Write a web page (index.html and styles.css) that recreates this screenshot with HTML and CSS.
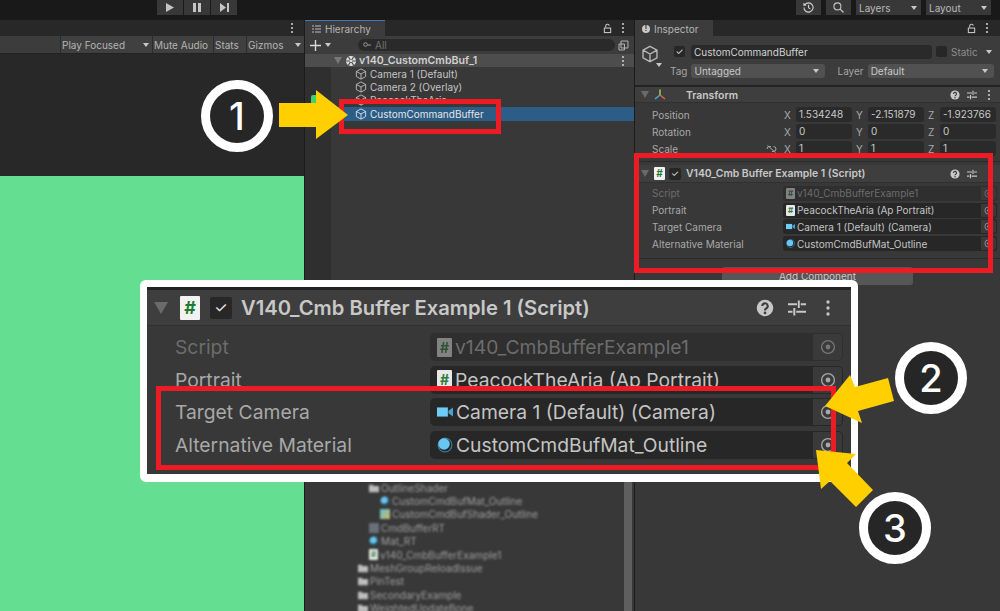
FILE: index.html
```html
<!DOCTYPE html>
<html lang="en">
<head>
    <meta charset="UTF-8">
    <title>Unity Editor</title>
    <link rel="stylesheet" href="styles.css">
</head>
<body>
<svg class="defs" width="0" height="0">
    <symbol id="cube" viewBox="0 0 16 16"><path d="M8 1.2 14.2 4.6V11.4L8 14.8 1.8 11.4V4.6ZM1.8 4.6 8 8 14.2 4.6M8 8V14.8" fill="none" stroke="currentColor" stroke-width="1.2"/></symbol>
    <symbol id="dots" viewBox="0 0 4 12"><circle cx="2" cy="2" r="1.1" fill="currentColor"/><circle cx="2" cy="6" r="1.1" fill="currentColor"/><circle cx="2" cy="10" r="1.1" fill="currentColor"/></symbol>
    <symbol id="lock" viewBox="0 0 10 12"><path d="M3 5V3.5A2 2 0 0 1 7 3" fill="none" stroke="currentColor" stroke-width="1.2"/><rect x="1.5" y="5.5" width="7" height="5" fill="none" stroke="currentColor" stroke-width="1.2"/></symbol>
    <symbol id="sliders" viewBox="0 0 12 12"><path d="M0 3.5H6M8.500 3.500H12M0 8.500H3M5.500 8.500H12M7.200 1V6M4.200 6V11" fill="none" stroke="currentColor" stroke-width="1.3"/></symbol>
    <symbol id="target" viewBox="0 0 12 12"><circle cx="6" cy="6" r="4.800" fill="none" stroke="currentColor" stroke-width="1"/><circle cx="6" cy="6" r="1.800" fill="currentColor"/></symbol>
    <symbol id="help" viewBox="0 0 12 12"><circle cx="6" cy="6" r="5.500" fill="currentColor"/><path d="M4.200 4.700A1.800 1.800 0 1 1 6.800 6.300C6.200 6.700 6 7 6 7.600" fill="none" stroke="#3c3c3c" stroke-width="1.400"/><circle cx="6" cy="9.300" r=".9" fill="#3c3c3c"/></symbol>
    <symbol id="camera" viewBox="0 0 14 10"><rect x="0" y="1" width="9.500" height="8" fill="#6fcdf5"/><path d="M10 4 14 1V9L10 6Z" fill="#4aa3cc"/></symbol>
    <symbol id="sphere" viewBox="0 0 12 12"><circle cx="6" cy="6" r="5.600" fill="#3b7a96"/><circle cx="6" cy="6" r="4.700" fill="#232323"/><circle cx="5.300" cy="5.200" r="4.300" fill="#67c6f2"/></symbol>
    <symbol id="folder" viewBox="0 0 12 10"><path d="M0 1H4.500L5.500 2.500H12V10H0Z" fill="#bdbdbd"/></symbol>
</svg>

<div class="app">
    <div class="toolbar">
        <div class="play-group">
            <button class="tool-btn"><svg width="8" height="9" viewBox="0 0 8 9"><path d="M0 0 8 4.500 0 9Z" fill="#c4c4c4"/></svg></button>
            <button class="tool-btn"><svg width="8" height="9" viewBox="0 0 8 9"><path d="M0 0H3V9H0ZM5 0H8V9H5Z" fill="#c4c4c4"/></svg></button>
            <button class="tool-btn"><svg width="9" height="9" viewBox="0 0 9 9"><path d="M0 0 6 4.500 0 9ZM7 0H9V9H7Z" fill="#c4c4c4"/></svg></button>
        </div>
        <div class="tool-right">
            <button class="tool-btn icon-btn"><svg width="11" height="11" viewBox="0 0 12 12"><path d="M2 3A5 5 0 1 1 1 6M1 1V3.500H3.500M6 3V6.300L8 7.500" fill="none" stroke="#d0d0d0" stroke-width="1.200"/></svg></button>
            <button class="tool-btn icon-btn search-btn"><svg width="11" height="11" viewBox="0 0 12 12"><circle cx="4.800" cy="4.800" r="3.800" fill="none" stroke="#c4c4c4" stroke-width="1.200"/><path d="M7.800 7.800 11.500 11.500" stroke="#c4c4c4" stroke-width="1.400"/></svg></button>
            <div class="tool-drop layers">Layers<span class="caret"></span></div>
            <div class="tool-drop layout">Layout<span class="caret"></span></div>
        </div>
    </div>

    <div class="panes">
        <section class="game">
            <div class="tabbar game-tabbar"><svg class="dots"><use href="#dots"/></svg></div>
            <div class="game-controls">
                <div class="gc-btn gc-play">Play Focused<span class="caret"></span></div>
                <div class="gc-btn gc-mute">Mute Audio</div>
                <div class="gc-btn gc-stats">Stats</div>
                <div class="gc-btn gc-gizmos">Gizmos<span class="caret"></span></div>
            </div>
            <div class="game-dark"></div>
            <div class="game-view"></div>
        </section>

        <section class="hierarchy">
            <div class="tabbar">
                <div class="tab hier-tab"><svg class="tab-icon" width="9" height="8" viewBox="0 0 9 8"><path d="M0 1H2M3 1H9M0 4H2M3 4H9M0 7H2M3 7H9" stroke="#bbb" stroke-width="1"/></svg>Hierarchy</div>
                <svg class="lock"><use href="#lock"/></svg>
                <svg class="dots"><use href="#dots"/></svg>
            </div>
            <div class="hier-search">
                <svg class="plus" width="11" height="11" viewBox="0 0 11 11"><path d="M5.500 0V11M0 5.500H11" stroke="#d8d8d8" stroke-width="1.400"/></svg>
                <span class="caret"></span>
                <div class="search-field"><svg width="8" height="6" viewBox="0 0 8 6"><circle cx="2.500" cy="2.500" r="1.800" fill="none" stroke="#999"/><path d="M4.500 3H8" stroke="#999"/></svg><span>All</span></div>
                <svg class="save-icon" width="11" height="11" viewBox="0 0 11 11"><path d="M3 1H10V8H3ZM1 4H6.500V10H1Z" fill="none" stroke="#b5b5b5"/></svg>
            </div>
            <div class="scene-row">
                <span class="tri-down"></span>
                <svg class="scene-icon" width="10" height="10" viewBox="0 0 10 10"><circle cx="5" cy="5" r="5" fill="#e0e0e0"/><path d="M5 5 2.500 1M5 5 7.500 1M5 5H0M5 5H10M5 5 2.500 9M5 5 7.500 9" stroke="#4d4d4d" stroke-width="1.200"/><circle cx="5" cy="5" r="1.200" fill="#e0e0e0"/></svg>
                <span>v140_CustomCmbBuf_1</span>
                <svg class="dots"><use href="#dots"/></svg>
            </div>
            <div class="hier-list">
                <div class="hier-row"><svg class="cube"><use href="#cube"/></svg>Camera 1 (Default)</div>
                <div class="hier-row"><svg class="cube"><use href="#cube"/></svg>Camera 2 (Overlay)</div>
                <div class="hier-row"><span class="gutter-ico"></span><svg class="cube"><use href="#cube"/></svg>PeacockTheAria</div>
                <div class="hier-row selected"><svg class="cube"><use href="#cube"/></svg>CustomCommandBuffer</div>
            </div>
            <div class="project">
                <div class="tree-row lv2"><svg class="ico"><use href="#folder"/></svg>OutlineShader</div>
                <div class="tree-row lv3"><svg class="ico"><use href="#sphere"/></svg>CustomCmdBufMat_Outline</div>
                <div class="tree-row lv3"><span class="shader-ico"></span>CustomCmdBufShader_Outline</div>
                <div class="tree-row lv2"><span class="rt-ico"></span>CmdBufferRT</div>
                <div class="tree-row lv2"><svg class="ico"><use href="#sphere"/></svg>Mat_RT</div>
                <div class="tree-row lv2"><span class="doc-ico"></span>v140_CmbBufferExample1</div>
                <div class="tree-row lv1"><svg class="ico"><use href="#folder"/></svg>MeshGroupReloadIssue</div>
                <div class="tree-row lv1"><svg class="ico"><use href="#folder"/></svg>PinTest</div>
                <div class="tree-row lv1"><svg class="ico"><use href="#folder"/></svg>SecondaryExample</div>
                <div class="tree-row lv1"><svg class="ico"><use href="#folder"/></svg>WeightedUpdateBone</div>
                <div class="scrollbar"></div>
            </div>
        </section>

        <section class="inspector">
            <div class="tabbar">
                <div class="tab insp-tab"><span class="info-dot">!</span>Inspector</div>
                <svg class="lock"><use href="#lock"/></svg>
                <svg class="dots"><use href="#dots"/></svg>
            </div>
            <div class="obj-head">
                <div class="obj-icon"><svg class="obj-cube"><use href="#cube"/></svg><span class="caret"></span></div>
                <div class="obj-lines">
                    <div class="obj-line">
                        <span class="check">&#10003;</span>
                        <div class="name-field">CustomCommandBuffer</div>
                        <span class="check static-check"></span>
                        <span class="static-label">Static</span>
                        <span class="caret"></span>
                    </div>
                    <div class="obj-line second">
                        <span class="tag-label">Tag</span>
                        <div class="select tag-select">Untagged<span class="caret"></span></div>
                        <span class="layer-label">Layer</span>
                        <div class="select layer-select">Default<span class="caret"></span></div>
                    </div>
                </div>
            </div>
            <div class="comp-head transform-head">
                <span class="tri-down"></span>
                <svg class="axis" width="12" height="12" viewBox="0 0 12 12"><path d="M6 6V0.500" stroke="#8ccf3e" stroke-width="1.600"/><path d="M6 6 1 10" stroke="#49a6e0" stroke-width="1.600"/><path d="M6 6 11 10" stroke="#e4603a" stroke-width="1.600"/></svg>
                <span class="comp-title">Transform</span>
                <svg class="hd-icon"><use href="#help"/></svg>
                <svg class="hd-icon"><use href="#sliders"/></svg>
                <svg class="dots"><use href="#dots"/></svg>
            </div>
            <div class="transform-body">
                <div class="t-row"><span class="t-label">Position</span><span class="axis-l">X</span><span class="t-field">1.534248</span><span class="axis-l">Y</span><span class="t-field">-2.151879</span><span class="axis-l">Z</span><span class="t-field">-1.923766</span></div>
                <div class="t-row"><span class="t-label">Rotation</span><span class="axis-l">X</span><span class="t-field">0</span><span class="axis-l">Y</span><span class="t-field">0</span><span class="axis-l">Z</span><span class="t-field">0</span></div>
                <div class="t-row"><span class="t-label">Scale<svg class="link-ico" width="11" height="8" viewBox="0 0 11 8"><path d="M1 4A2.500 2.500 0 0 1 3.500 1.500H5M6 6.500H7.500A2.500 2.500 0 0 0 7.500 1.500M1.500 .5 9.500 7.500" fill="none" stroke="#a8a8a8" stroke-width="1"/></svg></span><span class="axis-l">X</span><span class="t-field">1</span><span class="axis-l">Y</span><span class="t-field">1</span><span class="axis-l">Z</span><span class="t-field">1</span></div>
            </div>
            <div class="comp-head script-head">
                <span class="tri-down"></span>
                <span class="script-ico">#</span>
                <span class="check">&#10003;</span>
                <span class="comp-title">V140_Cmb Buffer Example 1 (Script)</span>
                <svg class="hd-icon"><use href="#help"/></svg>
                <svg class="hd-icon"><use href="#sliders"/></svg>
                <svg class="dots no-dots"><use href="#dots"/></svg>
            </div>
            <div class="script-body">
                <div class="p-row dim"><span class="p-label">Script</span><div class="p-field"><span class="doc-ico"></span>v140_CmbBufferExample1<span class="pick-box"><svg class="pick"><use href="#target"/></svg></span></div></div>
                <div class="p-row"><span class="p-label">Portrait</span><div class="p-field"><span class="doc-ico"></span>PeacockTheAria (Ap Portrait)<span class="pick-box"><svg class="pick"><use href="#target"/></svg></span></div></div>
                <div class="p-row"><span class="p-label">Target Camera</span><div class="p-field"><svg class="f-ico"><use href="#camera"/></svg>Camera 1 (Default) (Camera)<span class="pick-box"><svg class="pick"><use href="#target"/></svg></span></div></div>
                <div class="p-row"><span class="p-label">Alternative Material</span><div class="p-field"><svg class="f-ico"><use href="#sphere"/></svg>CustomCmdBufMat_Outline<span class="pick-box"><svg class="pick"><use href="#target"/></svg></span></div></div>
            </div>
            <div class="add-wrap"><div class="add-btn">Add Component</div></div>
        </section>
    </div>
</div>

<!-- magnified copy of the script component -->
<div class="zoom-panel">
    <div class="comp-head">
        <span class="tri-down"></span>
        <span class="script-ico">#</span>
        <span class="check">&#10003;</span>
        <span class="comp-title">V140_Cmb Buffer Example 1 (Script)</span>
        <svg class="hd-icon"><use href="#help"/></svg>
        <svg class="hd-icon"><use href="#sliders"/></svg>
        <svg class="dots"><use href="#dots"/></svg>
    </div>
    <div class="zoom-body">
        <div class="p-row dim"><span class="p-label">Script</span><div class="p-field"><span class="doc-ico"></span>v140_CmbBufferExample1<span class="pick-box"><svg class="pick"><use href="#target"/></svg></span></div></div>
        <div class="p-row"><span class="p-label">Portrait</span><div class="p-field"><span class="doc-ico"></span>PeacockTheAria (Ap Portrait)<span class="pick-box"><svg class="pick"><use href="#target"/></svg></span></div></div>
        <div class="p-row"><span class="p-label">Target Camera</span><div class="p-field"><svg class="f-ico"><use href="#camera"/></svg>Camera 1 (Default) (Camera)<span class="pick-box"><svg class="pick"><use href="#target"/></svg></span></div></div>
        <div class="p-row"><span class="p-label">Alternative Material</span><div class="p-field"><svg class="f-ico"><use href="#sphere"/></svg>CustomCmdBufMat_Outline<span class="pick-box"><svg class="pick"><use href="#target"/></svg></span></div></div>
    </div>
</div>

<div class="redbox red-hier"></div>
<div class="redbox red-insp"></div>
<div class="redbox red-zoom"></div>

<svg class="arrows" width="1000" height="611" viewBox="0 0 1000 611">
    <path d="M279 103H316V90L348 115 316 139V127H279Z" fill="#ffcf00"/>
    <path d="M888 378 855 387 850 375 825 406 862 423 858 411 894 401Z" fill="#ffcf00"/>
    <path d="M873 490 847 463 856 454 816 450 821 489 830 481 856 507Z" fill="#ffcf00"/>
</svg>

<div class="badge badge-1">1</div>
<div class="badge badge-2">2</div>
<div class="badge badge-3">3</div>
</body>
</html>
```

FILE: styles.css
```css
* {
    margin: 0;
    padding: 0;
    box-sizing: border-box;
}
body {
    width: 1000px;
    height: 611px;
    overflow: hidden;
    background: #191919;
    font-family: "Inter", "Liberation Sans", sans-serif;
    font-size: 10px;
    color: #c4c4c4;
}
.defs {
    position: absolute;
}
.app {
    width: 1000px;
    height: 611px;
    display: flex;
    flex-direction: column;
}

/* shared bits */
.caret {
    display: inline-block;
    width: 0;
    height: 0;
    border-left: 3.5px solid transparent;
    border-right: 3.5px solid transparent;
    border-top: 4px solid #c8c8c8;
    flex: none;
}
.tri-down {
    width: 0;
    height: 0;
    border-left: 4px solid transparent;
    border-right: 4px solid transparent;
    border-top: 7px solid #6a6a6a;
    flex: none;
}
.dots {
    width: 4px;
    height: 12px;
    color: #c8c8c8;
    flex: none;
}
.lock {
    width: 9px;
    height: 11px;
    color: #c4c4c4;
    flex: none;
}
.check {
    width: 12px;
    height: 12px;
    background: #272727;
    border-radius: 2px;
    color: #e8e8e8;
    font-size: 9px;
    line-height: 12px;
    text-align: center;
    flex: none;
}

/* top toolbar */
.toolbar {
    height: 20px;
    flex: none;
    display: flex;
    padding: 0 9px 5px 157px;
    background: #191919;
}
.play-group {
    display: flex;
    gap: 1px;
}
.tool-btn {
    width: 26px;
    height: 15px;
    border: none;
    background: #383838;
    display: flex;
    align-items: center;
    justify-content: center;
}
.tool-right {
    margin-left: auto;
    display: flex;
}
.icon-btn {
    width: 25px;
}
.search-btn {
    margin-left: 5px;
}
.tool-drop {
    height: 15px;
    background: #383838;
    color: #b8b8b8;
    padding: 1px 4px 0 3px;
    display: flex;
    align-items: center;
    justify-content: space-between;
}
.layers {
    width: 65px;
    margin-left: 5px;
}
.layout {
    width: 65px;
    margin-left: 5px;
}

/* panes */
.panes {
    flex: 1;
    display: flex;
    min-height: 0;
}
.tabbar {
    height: 16px;
    flex: none;
    background: #282828;
    display: flex;
    align-items: center;
    justify-content: flex-end;
    gap: 9px;
    padding-right: 9px;
}
.tab {
    height: 16px;
    margin-right: auto;
    background: #3c3c3c;
    display: flex;
    align-items: center;
    color: #b4b4b4;
}

/* game view */
.game {
    width: 304px;
    flex: none;
    display: flex;
    flex-direction: column;
    background: #282828;
}
.game-tabbar {
    padding-right: 10px;
}
.game-controls {
    height: 17px;
    flex: none;
    background: #3c3c3c;
    display: flex;
    padding-left: 60px;
    box-shadow: 0 1px 0 #222;
}
.gc-btn {
    height: 17px;
    background: #404040;
    border-left: 1px solid #2c2c2c;
    color: #b4b4b4;
    display: flex;
    align-items: center;
    justify-content: space-between;
    padding: 1px 3px 0 1px;
}
.gc-play {
    width: 92px;
}
.gc-mute {
    width: 61px;
}
.gc-stats {
    width: 33px;
}
.gc-gizmos {
    width: 58px;
}
.game-dark {
    height: 123px;
    flex: none;
}
.game-view {
    flex: 1;
    background: #64de90;
}

/* hierarchy */
.hierarchy {
    width: 331px;
    flex: none;
    display: flex;
    flex-direction: column;
    border-left: 1px solid #1c1c1c;
    border-right: 1px solid #1c1c1c;
    background: #383838;
    overflow: hidden;
}
.hier-tab {
    width: 80px;
    border-top: 1px solid #3a79bb;
    gap: 4px;
    padding: 1px 0 0 7px;
}
.hierarchy .tabbar {
    padding-right: 9px;
}
.hier-search {
    height: 18px;
    flex: none;
    background: #3c3c3c;
    display: flex;
    align-items: center;
    padding: 0 5px;
}
.plus {
    flex: none;
}
.hier-search .caret {
    margin-left: 4px;
}
.search-field {
    width: 258px;
    height: 12px;
    margin-left: 27px;
    background: #2a2a2a;
    border-radius: 6px;
    display: flex;
    align-items: center;
    gap: 4px;
    padding-left: 5px;
    color: #707070;
}
.save-icon {
    margin-left: 3px;
}
.scene-row {
    height: 13px;
    flex: none;
    background: #4d4d4d;
    display: flex;
    align-items: center;
    padding: 0 9px 0 29px;
    font-size: 10.6px;
    font-weight: 600;
    color: #d0d0d0;
}
.scene-row .tri-down {
    margin-right: 4px;
    border-top-color: #777;
}
.scene-icon {
    margin-right: 3px;
}
.scene-row .dots {
    margin-left: auto;
}
.hier-list {
    flex: 1;
    background: linear-gradient(90deg, #2f2f2f 26px, #383838 26px);
}
.hier-row {
    height: 13.4px;
    padding-left: 50px;
    display: flex;
    align-items: center;
    gap: 3px;
    color: #c4c4c4;
    position: relative;
}
.hier-row.selected {
    background: #2c5d87;
    color: #e4e4e4;
}
.gutter-ico {
    position: absolute;
    left: 6px;
    top: 1px;
    width: 10px;
    height: 10px;
    border-radius: 2px;
    background: #3ed36c;
}
.cube {
    width: 12px;
    height: 12px;
    color: #c0c0c0;
    flex: none;
}
.selected .cube {
    color: #d8e4ee;
}

/* blurred project tree */
.project {
    height: 134px;
    flex: none;
    position: relative;
    padding-top: 4px;
    overflow: hidden;
}
.tree-row {
    height: 13.4px;
    display: flex;
    align-items: center;
    gap: 2px;
    color: #a0a0a0;
    filter: blur(1px);
}
.lv1 {
    padding-left: 53px;
}
.lv2 {
    padding-left: 64px;
}
.lv3 {
    padding-left: 75px;
}
.ico {
    width: 10px;
    height: 10px;
    flex: none;
}
.shader-ico {
    width: 10px;
    height: 10px;
    flex: none;
    background: linear-gradient(135deg, #5bc0d8, #d6b860);
}
.rt-ico {
    width: 10px;
    height: 10px;
    flex: none;
    background: #687078;
}
.doc-ico {
    width: 9px;
    height: 11px;
    flex: none;
    background: #e8e8e8;
    border-radius: 1px;
    color: #2e7d3c;
    font-size: 8px;
    font-weight: 700;
    line-height: 11px;
    text-align: center;
}
.doc-ico::before {
    content: "#";
}
.scrollbar {
    position: absolute;
    top: 3px;
    right: 2px;
    width: 8px;
    height: 140px;
    border-radius: 4px;
    background: #5f5f5f;
}

/* inspector */
.inspector {
    flex: 1;
    display: flex;
    flex-direction: column;
    background: #383838;
}
.inspector .tabbar {
    padding-right: 11px;
}
.insp-tab {
    width: 78px;
    gap: 4px;
    padding: 1px 0 0 7px;
}
.info-dot {
    width: 8px;
    height: 8px;
    border-radius: 50%;
    background: #c8c8c8;
    color: #333;
    font-size: 7px;
    font-weight: 700;
    line-height: 8px;
    text-align: center;
}
.obj-head {
    height: 51px;
    flex: none;
    display: flex;
    padding: 8px 4px 0 6px;
    background: #3c3c3c;
    border-bottom: 2px solid #232323;
}
.obj-icon {
    width: 18px;
    flex: none;
    display: flex;
    flex-direction: column;
    align-items: flex-end;
}
.obj-cube {
    width: 18px;
    height: 18px;
    margin-top: 1px;
    color: #b8b8b8;
    flex: none;
}
.obj-icon .caret {
    margin-right: -3px;
}
.obj-lines {
    flex: 1;
    padding-left: 5px;
}
.obj-line {
    display: flex;
    align-items: center;
    height: 15px;
    padding-left: 10px;
}
.obj-line .check {
    width: 11px;
    height: 11px;
    line-height: 11px;
}
.name-field {
    width: 241px;
    height: 14px;
    margin-left: 6px;
    padding-left: 3px;
    background: #2a2a2a;
    border-radius: 3px;
    line-height: 14px;
    color: #d2d2d2;
}
.static-check {
    margin-left: 4px;
}
.static-label {
    margin-left: 4px;
    color: #8c8c8c;
}
.obj-line .caret {
    margin-left: 8px;
}
.obj-line.second {
    margin-top: 4px;
    padding-left: 6px;
}
.tag-label,
.layer-label {
    color: #a4a4a4;
}
.select {
    height: 14px;
    background: #515151;
    border-radius: 3px;
    display: flex;
    align-items: center;
    justify-content: space-between;
    padding: 0 6px 0 3px;
    color: #c8c8c8;
}
.tag-select {
    width: 134px;
    margin-left: 4px;
}
.layer-label {
    margin-left: 12px;
}
.layer-select {
    width: 126px;
    margin-left: 4px;
}
.comp-head {
    height: 16px;
    flex: none;
    background: #3e3e3e;
    display: flex;
    align-items: center;
    padding: 0 9px 0 6px;
    border-bottom: 1px solid #303030;
}
.comp-title {
    font-size: 10.4px;
    font-weight: 600;
    color: #c8c8c8;
    margin-right: auto;
}
.hd-icon {
    width: 10px;
    height: 10px;
    margin-right: 7px;
    color: #c8c8c8;
    flex: none;
}
.comp-head .dots {
    margin-left: 3px;
}
.no-dots {
    visibility: hidden;
}
.transform-head .axis {
    margin-left: 5px;
}
.transform-head .comp-title {
    margin-left: 20px;
    padding-top: 1px;
}
.transform-body {
    height: 59px;
    flex: none;
    padding-top: 3px;
    border-bottom: 1px solid #2a2a2a;
}
.t-row {
    height: 17px;
    display: flex;
    align-items: center;
    padding-left: 17px;
    color: #a8a8a8;
}
.t-label {
    width: 132px;
    display: flex;
    align-items: center;
    justify-content: space-between;
    padding-right: 7px;
}
.axis-l {
    width: 12px;
}
.t-field {
    width: 56px;
    height: 15px;
    margin-right: 4px;
    padding-left: 3px;
    background: #2a2a2a;
    border-radius: 3px;
    line-height: 15px;
    color: #c8c8c8;
}
.script-head {
    margin-top: 3px;
    height: 18px;
}
.script-head .script-ico {
    margin-left: 5px;
}
.script-head .check {
    margin-left: 4px;
}
.script-head .comp-title {
    margin-left: 5px;
}
.script-ico {
    width: 11px;
    height: 13px;
    flex: none;
    background: #f2f2f2;
    border-radius: 1px;
    color: #1f7a31;
    font-size: 10px;
    font-weight: 700;
    line-height: 13px;
    text-align: center;
}
.script-body {
    height: 76px;
    flex: none;
    padding-top: 2px;
    border-bottom: 1px solid #2a2a2a;
}
.p-row {
    height: 16.8px;
    display: flex;
    align-items: center;
    padding-left: 17px;
    color: #a8a8a8;
}
.p-label {
    width: 131px;
}
.p-field {
    width: 214px;
    height: 15px;
    display: flex;
    align-items: center;
    gap: 2px;
    padding-left: 3px;
    background: #272727;
    border-radius: 3px;
    color: #c4c4c4;
}
.f-ico {
    width: 9px;
    height: 9px;
    flex: none;
}
.pick-box {
    width: 15px;
    height: 13px;
    margin: 0 1px 0 auto;
    background: #3a3a3a;
    border-radius: 0 3px 3px 0;
    display: flex;
    align-items: center;
    justify-content: center;
    flex: none;
}
.pick {
    width: 9px;
    height: 9px;
    color: #a8a8a8;
    flex: none;
}
.dim {
    color: #6c6c6c;
}
.dim .p-field {
    background: #2f2f2f;
    color: #6c6c6c;
}
.dim .doc-ico {
    opacity: .45;
}
.dim .pick {
    color: #777;
}
.add-wrap {
    padding: 8px 0 0 87px;
}
.add-btn {
    width: 191px;
    height: 18px;
    background: #565656;
    border-radius: 3px;
    text-align: center;
    line-height: 18px;
    color: #c8c8c8;
}

/* magnified panel, sits over the editor */
.zoom-panel {
    position: absolute;
    left: 140px;
    top: 280px;
    width: 718px;
    height: 202px;
    border: 7px solid #fff;
    border-bottom-width: 8px;
    border-radius: 6px;
    background: #383838;
    box-shadow: inset 0 3px 0 #222;
    overflow: hidden;
    font-size: 19.3px;
}
.zoom-panel .comp-head {
    height: 36px;
    margin-top: 3px;
    background: #3e3e3e;
    padding: 0 20px 0 7px;
}
.zoom-panel .tri-down {
    border-left-width: 7px;
    border-right-width: 7px;
    border-top-width: 12px;
}
.zoom-panel .script-ico {
    width: 20px;
    height: 24px;
    margin-left: 12px;
    font-size: 18px;
    line-height: 24px;
}
.zoom-panel .check {
    width: 22px;
    height: 22px;
    margin-left: 10px;
    font-size: 15px;
    line-height: 22px;
}
.zoom-panel .comp-title {
    margin-left: 9px;
    font-size: 20.2px;
}
.zoom-panel .hd-icon {
    width: 18px;
    height: 18px;
    margin-right: 14px;
}
.zoom-panel .dots {
    width: 6px;
    height: 18px;
    margin-left: 5px;
}
.zoom-body {
    padding: 5px 0 0 28px;
}
.zoom-panel .p-row {
    height: 32.5px;
    padding-left: 0;
}
.zoom-panel .p-label {
    width: 255px;
}
.zoom-panel .p-field {
    width: 413px;
    height: 28px;
    gap: 3px;
    padding-left: 7px;
    border-radius: 5px;
}
.zoom-panel .doc-ico {
    width: 15px;
    height: 19px;
    font-size: 14px;
    line-height: 19px;
}
.zoom-panel .f-ico {
    width: 16px;
    height: 16px;
}
.zoom-panel .pick-box {
    width: 29px;
    height: 26px;
    border-radius: 0 4px 4px 0;
}
.zoom-panel .pick {
    width: 16px;
    height: 16px;
}

/* annotations */
.redbox {
    position: absolute;
    border: 5px solid #ed1c24;
}
.red-hier {
    left: 339px;
    top: 99px;
    width: 162px;
    height: 35px;
}
.red-insp {
    left: 634px;
    top: 153px;
    width: 359px;
    height: 120px;
}
.red-zoom {
    left: 156px;
    top: 386px;
    width: 680px;
    height: 84px;
}
.arrows {
    position: absolute;
    left: 0;
    top: 0;
}
.badge {
    position: absolute;
    width: 72px;
    height: 72px;
    border: 9px solid #fff;
    border-radius: 50%;
    background: #262626;
    color: #fff;
    font-size: 38px;
    font-weight: 500;
    line-height: 54px;
    text-align: center;
}
.badge-1 {
    left: 201px;
    top: 80px;
}
.badge-2 {
    left: 895px;
    top: 342px;
}
.badge-3 {
    left: 859px;
    top: 492px;
}
```
